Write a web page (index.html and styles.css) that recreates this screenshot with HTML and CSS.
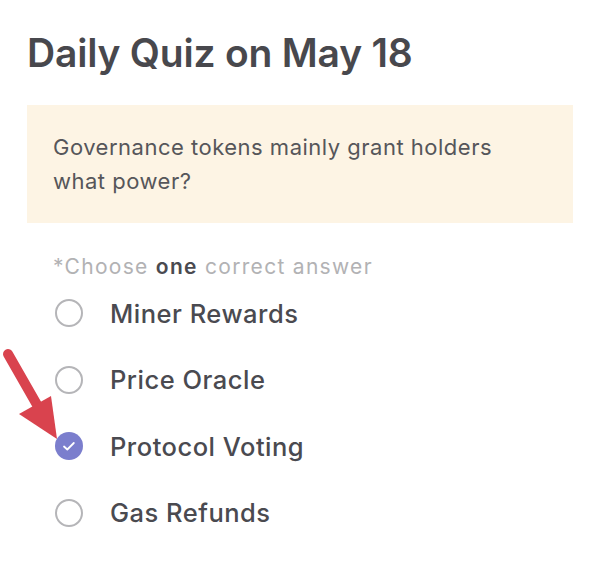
FILE: index.html
```html
<!DOCTYPE html>
<html lang="en">
<head>
<meta charset="utf-8">
<link rel="stylesheet" href="styles.css">
<title>Daily Quiz</title>
</head>
<body>
<main class="quiz">
  <h1 class="title">Daily Quiz on May 18</h1>
  <div class="question">Governance tokens mainly grant holders what power?</div>
  <p class="hint">*Choose <b>one</b> correct answer</p>
  <ul class="options">
    <li class="option"><span class="radio"></span><span class="label">Miner Rewards</span></li>
    <li class="option"><span class="radio"></span><span class="label">Price Oracle</span></li>
    <li class="option"><span class="radio checked"><svg viewBox="0 0 28 28" width="28" height="28"><path d="M9 14.5l3.3 3 6.5-6.5" fill="none" stroke="#fff" stroke-width="1.8" stroke-linecap="round" stroke-linejoin="round"/></svg></span><span class="label">Protocol Voting</span></li>
    <li class="option"><span class="radio"></span><span class="label">Gas Refunds</span></li>
  </ul>
  <svg class="arrow" viewBox="0 0 70 100" width="70" height="100">
    <path d="M8 14 L40 70" stroke="#d9434e" stroke-width="10" stroke-linecap="round" fill="none"/>
    <polygon points="19,74 51,56 57,99" fill="#d9434e"/>
  </svg>
</main>
</body>
</html>
```
FILE: styles.css
```css
html, body {
  margin: 0;
  padding: 0;
  background: #ffffff;
}
body {
  font-family: Inter, "Open Sans", sans-serif;
  color: #4a4a50;
}
.quiz {
  position: relative;
  padding: 24px 23px 0 27px;
}
.title {
  margin: 0;
  font-size: 39px;
  font-weight: 600;
  line-height: 58px;
  letter-spacing: -0.2px;
  color: #48484d;
}
.question {
  margin-top: 23px;
  background: #fdf4e4;
  padding: 25px 60px 25px 26px;
  font-size: 22px;
  line-height: 34px;
  letter-spacing: 0.5px;
  color: #56565a;
  font-weight: 400;
}
.hint {
  margin: 32px 0 0 26px;
  font-size: 21px;
  line-height: 24px;
  letter-spacing: 1.3px;
  color: #b2b2b4;
}
.hint b {
  color: #4a4a50;
  font-weight: 600;
}
.options {
  list-style: none;
  margin: 1px 0 0 0;
  padding: 0;
}
.option {
  display: flex;
  align-items: center;
  height: 66.5px;
  padding-left: 28px;
}
.radio {
  width: 28px;
  height: 28px;
  box-sizing: border-box;
  border: 2px solid #b5b5b8;
  border-radius: 50%;
  flex: none;
  display: flex;
}
.radio.checked {
  border: none;
  background: #7b7ecd;
}
.label {
  margin-left: 27px;
  font-size: 25.5px;
  font-weight: 500;
  letter-spacing: 0.5px;
  color: #4a4a50;
}
.arrow {
  position: absolute;
  left: 0;
  top: 340px;
}
```
